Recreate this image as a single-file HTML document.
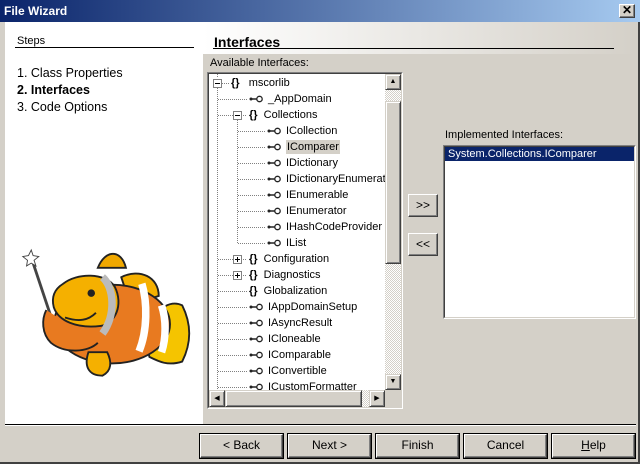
<!DOCTYPE html><html><head><style>
*{margin:0;padding:0;box-sizing:border-box}
body{width:640px;height:464px;background:#d4d0c8;font-family:"Liberation Sans",sans-serif;font-size:11px;position:relative;overflow:hidden;color:#000}
.a{position:absolute}
.title{left:0;top:0;width:640px;height:22px;background:linear-gradient(90deg,#0a246a,#a6caf0);color:#fff;font-weight:bold;font-size:12px;padding:4px 4px}
.btn{position:absolute;background:#d4d0c8;border:1px solid;border-color:#fff #404040 #404040 #fff;box-shadow:inset -1px -1px 0 #808080;text-align:center;font-size:12px}
.bb{outline:1px solid #000}
.row{position:absolute;height:16px;line-height:16px;white-space:nowrap;font-size:11px}
.k{display:inline-block;width:14px;height:8px;vertical-align:-1px;margin-right:5px}
.sb{position:absolute;background:#d4d0c8;border:1px solid;border-color:#d4d0c8 #404040 #404040 #d4d0c8;box-shadow:inset 1px 1px 0 #fff,inset -1px -1px 0 #808080}
.track{background:repeating-conic-gradient(#d4d0c8 0 25%,#fff 0 50%) 0 0/2px 2px}
</style></head><body>
<svg width="0" height="0" style="position:absolute"><defs><symbol id="key" viewBox="0 0 14 8"><circle cx="2" cy="4" r="1.5" fill="#222"/><path d="M3 4H8" stroke="#222" stroke-width="1.5"/><circle cx="10.5" cy="4" r="2.7" fill="none" stroke="#222" stroke-width="1.3"/></symbol></defs></svg>
<div class="a title">File Wizard</div>
<div class="btn" style="left:619px;top:4px;width:16px;height:14px;font-size:12px;line-height:11px;font-weight:bold">✕</div>
<div class="a" style="left:5px;top:22px;width:198px;height:402px;background:#fff"></div>
<div class="a" style="left:203px;top:22px;width:434px;height:32px;background:linear-gradient(90deg,#fff,#d4d0c8)"></div>
<div class="a" style="left:17px;top:35px;font-size:11px">Steps</div>
<div class="a" style="left:15px;top:47px;width:179px;height:1px;background:#000"></div>
<div class="a" style="left:17px;top:65px;font-size:12.5px;line-height:17px">1. Class Properties<br><b>2. Interfaces</b><br>3. Code Options</div>
<div class="a" style="left:214px;top:34px;font-size:14px;font-weight:bold">Interfaces</div>
<div class="a" style="left:213px;top:48px;width:401px;height:1px;background:#000"></div>
<div class="a" style="left:210px;top:57px">Available Interfaces:</div>
<div class="a" style="left:207px;top:72px;width:196px;height:337px;border:1px solid;border-color:#808080 #fff #fff #808080"></div>
<div class="a" style="left:208px;top:73px;width:194px;height:335px;border:1px solid;border-color:#404040 #d4d0c8 #d4d0c8 #404040;background:#fff;overflow:hidden">
<svg class="a" style="left:0;top:0" width="180" height="320">
<g stroke="#808080" stroke-dasharray="1 1" fill="none">
<path d="M8.5 0V4M8.5 14V320M13 9.5H20M9 25.5H38M9 41.5H24M32 41.5H38M9 185.5H24M32 185.5H38M9 201.5H24M32 201.5H38M9 217.5H38M9 233.5H38M9 249.5H38M9 265.5H38M9 281.5H38M9 297.5H38M9 313.5H38M28.5 46V169.5M29 57.5H56M29 73.5H56M29 89.5H56M29 105.5H56M29 121.5H56M29 137.5H56M29 153.5H56M29 169.5H56"/>
</g>
<g fill="#fff" stroke="#808080"><rect x="4.5" y="5.5" width="8" height="8"/><rect x="24.5" y="37.5" width="8" height="8"/><rect x="24.5" y="181.5" width="8" height="8"/><rect x="24.5" y="197.5" width="8" height="8"/></g>
<g stroke="#000"><path d="M6 9.5h5M26 41.5h5M26 185.5h5M28.5 183v5M26 201.5h5M28.5 199v5"/></g>
</svg>
<div class="row" style="left:22px;top:1px"><b>{}</b>&nbsp;&nbsp;&nbsp;mscorlib</div>
<div class="row" style="left:40px;top:17px"><svg class="k"><use href="#key"/></svg>_AppDomain</div>
<div class="row" style="left:40px;top:33px"><b>{}</b>&nbsp;&nbsp;Collections</div>
<div class="row" style="left:58px;top:49px"><svg class="k"><use href="#key"/></svg>ICollection</div>
<div class="row" style="left:58px;top:65px"><svg class="k"><use href="#key"/></svg><span style="background:#d4d0c8;padding:1px 1px">IComparer</span></div>
<div class="row" style="left:58px;top:81px"><svg class="k"><use href="#key"/></svg>IDictionary</div>
<div class="row" style="left:58px;top:97px"><svg class="k"><use href="#key"/></svg>IDictionaryEnumerator</div>
<div class="row" style="left:58px;top:113px"><svg class="k"><use href="#key"/></svg>IEnumerable</div>
<div class="row" style="left:58px;top:129px"><svg class="k"><use href="#key"/></svg>IEnumerator</div>
<div class="row" style="left:58px;top:145px"><svg class="k"><use href="#key"/></svg>IHashCodeProvider</div>
<div class="row" style="left:58px;top:161px"><svg class="k"><use href="#key"/></svg>IList</div>
<div class="row" style="left:40px;top:177px"><b>{}</b>&nbsp;&nbsp;Configuration</div>
<div class="row" style="left:40px;top:193px"><b>{}</b>&nbsp;&nbsp;Diagnostics</div>
<div class="row" style="left:40px;top:209px"><b>{}</b>&nbsp;&nbsp;Globalization</div>
<div class="row" style="left:40px;top:225px"><svg class="k"><use href="#key"/></svg>IAppDomainSetup</div>
<div class="row" style="left:40px;top:241px"><svg class="k"><use href="#key"/></svg>IAsyncResult</div>
<div class="row" style="left:40px;top:257px"><svg class="k"><use href="#key"/></svg>ICloneable</div>
<div class="row" style="left:40px;top:273px"><svg class="k"><use href="#key"/></svg>IComparable</div>
<div class="row" style="left:40px;top:289px"><svg class="k"><use href="#key"/></svg>IConvertible</div>
<div class="row" style="left:40px;top:305px"><svg class="k"><use href="#key"/></svg>ICustomFormatter</div>
<div class="a track" style="left:176px;top:0;width:16px;height:316px"></div>
<div class="sb" style="left:176px;top:0;width:16px;height:16px;font-size:7px;text-align:center;line-height:14px">▲</div>
<div class="sb" style="left:176px;top:27px;width:16px;height:163px"></div>
<div class="sb" style="left:176px;top:300px;width:16px;height:16px;font-size:7px;text-align:center;line-height:14px">▼</div>
<div class="a track" style="left:0;top:316px;width:176px;height:17px"></div>
<div class="sb" style="left:0;top:316px;width:16px;height:17px;font-size:7px;text-align:center;line-height:15px">◀</div>
<div class="sb" style="left:16px;top:316px;width:137px;height:17px"></div>
<div class="sb" style="left:160px;top:316px;width:16px;height:17px;font-size:7px;text-align:center;line-height:15px">▶</div>
<div class="a" style="left:176px;top:316px;width:18px;height:17px;background:#d4d0c8"></div>
</div>
<div class="btn" style="left:408px;top:194px;width:30px;height:23px;line-height:20px">&gt;&gt;</div>
<div class="btn" style="left:408px;top:233px;width:30px;height:23px;line-height:20px">&lt;&lt;</div>
<div class="a" style="left:445px;top:129px">Implemented Interfaces:</div>
<div class="a" style="left:443px;top:145px;width:193px;height:174px;border:1px solid;border-color:#808080 #fff #fff #808080"></div>
<div class="a" style="left:444px;top:146px;width:191px;height:172px;border:1px solid;border-color:#404040 #d4d0c8 #d4d0c8 #404040;background:#fff">
<div style="background:#0a246a;color:#fff;height:14px;line-height:14px;padding-left:3px">System.Collections.IComparer</div></div>
<svg class="a" style="left:5px;top:235px" width="195" height="150" viewBox="0 0 200 160">
<path d="M26 30L56 120" stroke="#444" stroke-width="3"/>
<path d="M21 22l3-6 2 6 6 1-5 4 2 6-5-3-5 3 1-6-5-4z" fill="#fff" stroke="#444"/>
<path d="M185 75c10 20 10 40 0 60-15 5-25 0-35-5l-5-25 10-20c10-10 20-15 30-10z" fill="#f5c400" stroke="#222" stroke-width="2"/>
<path d="M95 35c8-20 25-20 30 0z" fill="#f0a800" stroke="#222" stroke-width="2"/>
<path d="M120 45c20-10 40 0 40 20l-30 10z" fill="#f5b000" stroke="#222" stroke-width="2"/>
<ellipse cx="110" cy="95" rx="62" ry="42" fill="#e87a20" stroke="#222" stroke-width="2"/>
<path d="M40 80c-5 10-5 25 5 35 15 12 40 10 50 0" fill="#e87a20" stroke="#222" stroke-width="2"/>
<path d="M58 52c15-12 45-12 55 3 10 20 0 40-15 42-25 3-45-5-50-20-3-12 2-20 10-25z" fill="#f5b000" stroke="#222" stroke-width="2"/>
<path d="M100 45c12 10 15 40 0 60" stroke="#bbb" stroke-width="8" fill="none"/>
<path d="M142 52c6 20 6 50-3 72" stroke="#fff" stroke-width="8" fill="none"/>
<path d="M163 75c5 15 5 35 0 50" stroke="#fff" stroke-width="8" fill="none"/>
<circle cx="88" cy="62" r="4" fill="#222"/>
<path d="M60 88c15 5 25 3 33-5" stroke="#222" stroke-width="2" fill="none"/>
<path d="M85 125c-5 15 0 25 15 25 10-5 10-15 5-25z" fill="#f5b000" stroke="#222" stroke-width="2"/>
</svg>
<div class="a" style="left:5px;top:424px;width:631px;height:1px;background:#000"></div>
<div class="a" style="left:5px;top:425px;width:631px;height:1px;background:#fff"></div>
<div class="btn bb" style="left:200px;top:434px;width:83px;height:24px;line-height:21px">&lt; Back</div>
<div class="btn bb" style="left:288px;top:434px;width:83px;height:24px;line-height:21px">Next &gt;</div>
<div class="btn bb" style="left:376px;top:434px;width:83px;height:24px;line-height:21px">Finish</div>
<div class="btn bb" style="left:464px;top:434px;width:83px;height:24px;line-height:21px">Cancel</div>
<div class="btn bb" style="left:552px;top:434px;width:83px;height:24px;line-height:21px"><u>H</u>elp</div>
<div class="a" style="left:0;top:462px;width:640px;height:2px;background:#404040"></div>
<div class="a" style="left:638px;top:22px;width:2px;height:442px;background:#404040"></div>
</body></html>
